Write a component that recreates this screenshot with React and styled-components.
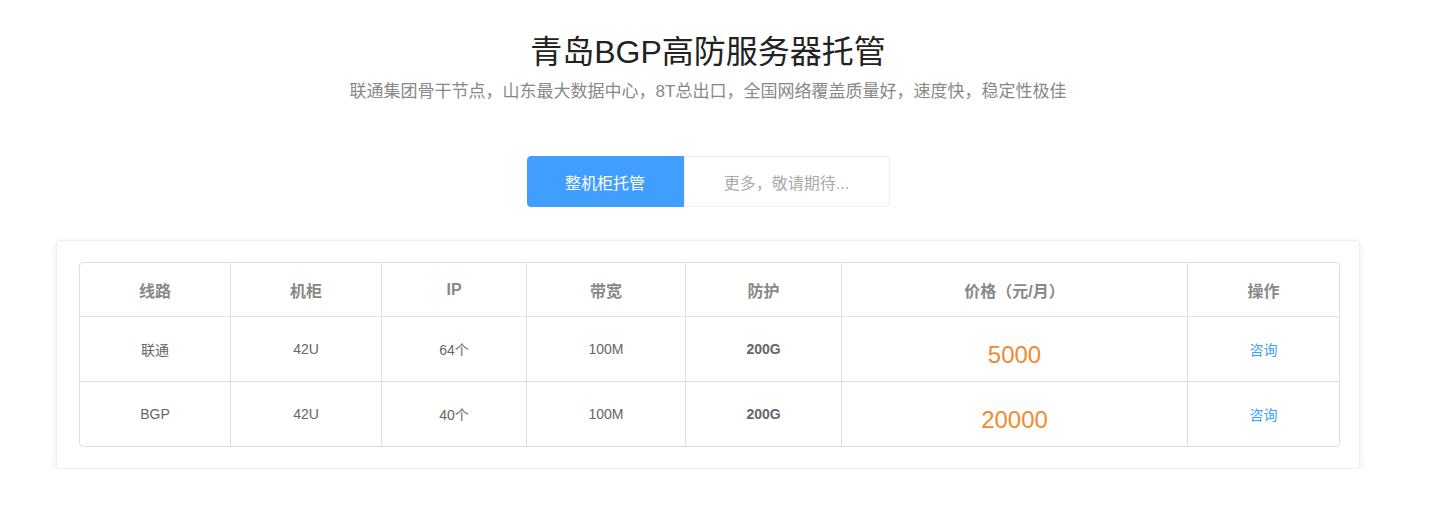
import React from 'react';
import styled, { createGlobalStyle } from 'styled-components';

const Global = createGlobalStyle`
  body { margin: 0; font-family: "Microsoft YaHei", "Liberation Sans", "Noto Sans CJK SC", sans-serif; background: #fff; }
`;

const Page = styled.div`
  width: 1416px; display: flex; flex-direction: column; align-items: center; padding-top: 30px;
`;
const Title = styled.h1`
  margin: 0; font-size: 32px; font-weight: 400; color: #222; line-height: 44px;
`;
const Sub = styled.p`
  margin: 6px 0 0; font-size: 17px; color: #888; line-height: 24px;
`;
const Tabs = styled.div`
  display: flex; margin-top: 52px;
`;
const Tab = styled.div`
  width: ${p => p.$w}px; height: 51px; box-sizing: border-box;
  display: flex; align-items: center; justify-content: center; font-size: 16px;
  background: ${p => p.$active ? '#409eff' : '#fff'};
  color: ${p => p.$active ? '#fff' : '#aaa'};
  border: 1px solid ${p => p.$active ? '#409eff' : '#eee'};
  border-radius: ${p => p.$active ? '4px 0 0 4px' : '0 4px 4px 0'};
`;
const Card = styled.div`
  margin-top: 33px; width: 1304px; box-sizing: border-box; padding: 21px 22px;
  border: 1px solid #eee; border-radius: 4px; box-shadow: 0 2px 8px rgba(0,0,0,0.08);
`;
const Table = styled.table`
  width: 100%; border-collapse: separate; border-spacing: 0;
  border: 1px solid #dcdfe6; border-radius: 4px; table-layout: fixed;
`;
const Th = styled.th`
  height: 53px; padding: 0; font-size: 16px; font-weight: 700; color: #888; text-align: center;
  border-right: 1px solid #dcdfe6; border-bottom: 1px solid #dcdfe6;
  &:last-child { border-right: none; }
`;
const Td = styled.td`
  height: 64px; padding: 0; text-align: center; font-size: 14px; color: #666;
  border-right: 1px solid #dcdfe6; border-bottom: 1px solid #dcdfe6;
  tr:last-child & { border-bottom: none; }
  &:last-child { border-right: none; }
  font-weight: ${p => p.$bold ? 700 : 400};
`;
const Price = styled.span`
  font-size: 24px; color: #f08a30; position: relative; top: 6px;
`;
const Link = styled.a`
  color: #409eff; font-size: 14px; cursor: pointer;
`;

const widths = [151, 151, 145, 159, 156, 346, 151];
const heads = ['线路', '机柜', 'IP', '带宽', '防护', '价格（元/月）', '操作'];
const rows = [
  ['联通', '42U', '64个', '100M', '200G', '5000'],
  ['BGP', '42U', '40个', '100M', '200G', '20000'],
];

export default function App() {
  return (
    <Page>
      <Global />
      <Title>青岛BGP高防服务器托管</Title>
      <Sub>联通集团骨干节点，山东最大数据中心，8T总出口，全国网络覆盖质量好，速度快，稳定性极佳</Sub>
      <Tabs>
        <Tab $active $w={157}>整机柜托管</Tab>
        <Tab $w={206}>更多，敬请期待...</Tab>
      </Tabs>
      <Card>
        <Table>
          <colgroup>{widths.map((w, i) => <col key={i} style={{ width: w }} />)}</colgroup>
          <thead><tr>{heads.map(h => <Th key={h}>{h}</Th>)}</tr></thead>
          <tbody>
            {rows.map(r => (
              <tr key={r[0]}>
                <Td>{r[0]}</Td><Td>{r[1]}</Td><Td>{r[2]}</Td><Td>{r[3]}</Td>
                <Td $bold>{r[4]}</Td>
                <Td><Price>{r[5]}</Price></Td>
                <Td><Link>咨询</Link></Td>
              </tr>
            ))}
          </tbody>
        </Table>
      </Card>
    </Page>
  );
}
